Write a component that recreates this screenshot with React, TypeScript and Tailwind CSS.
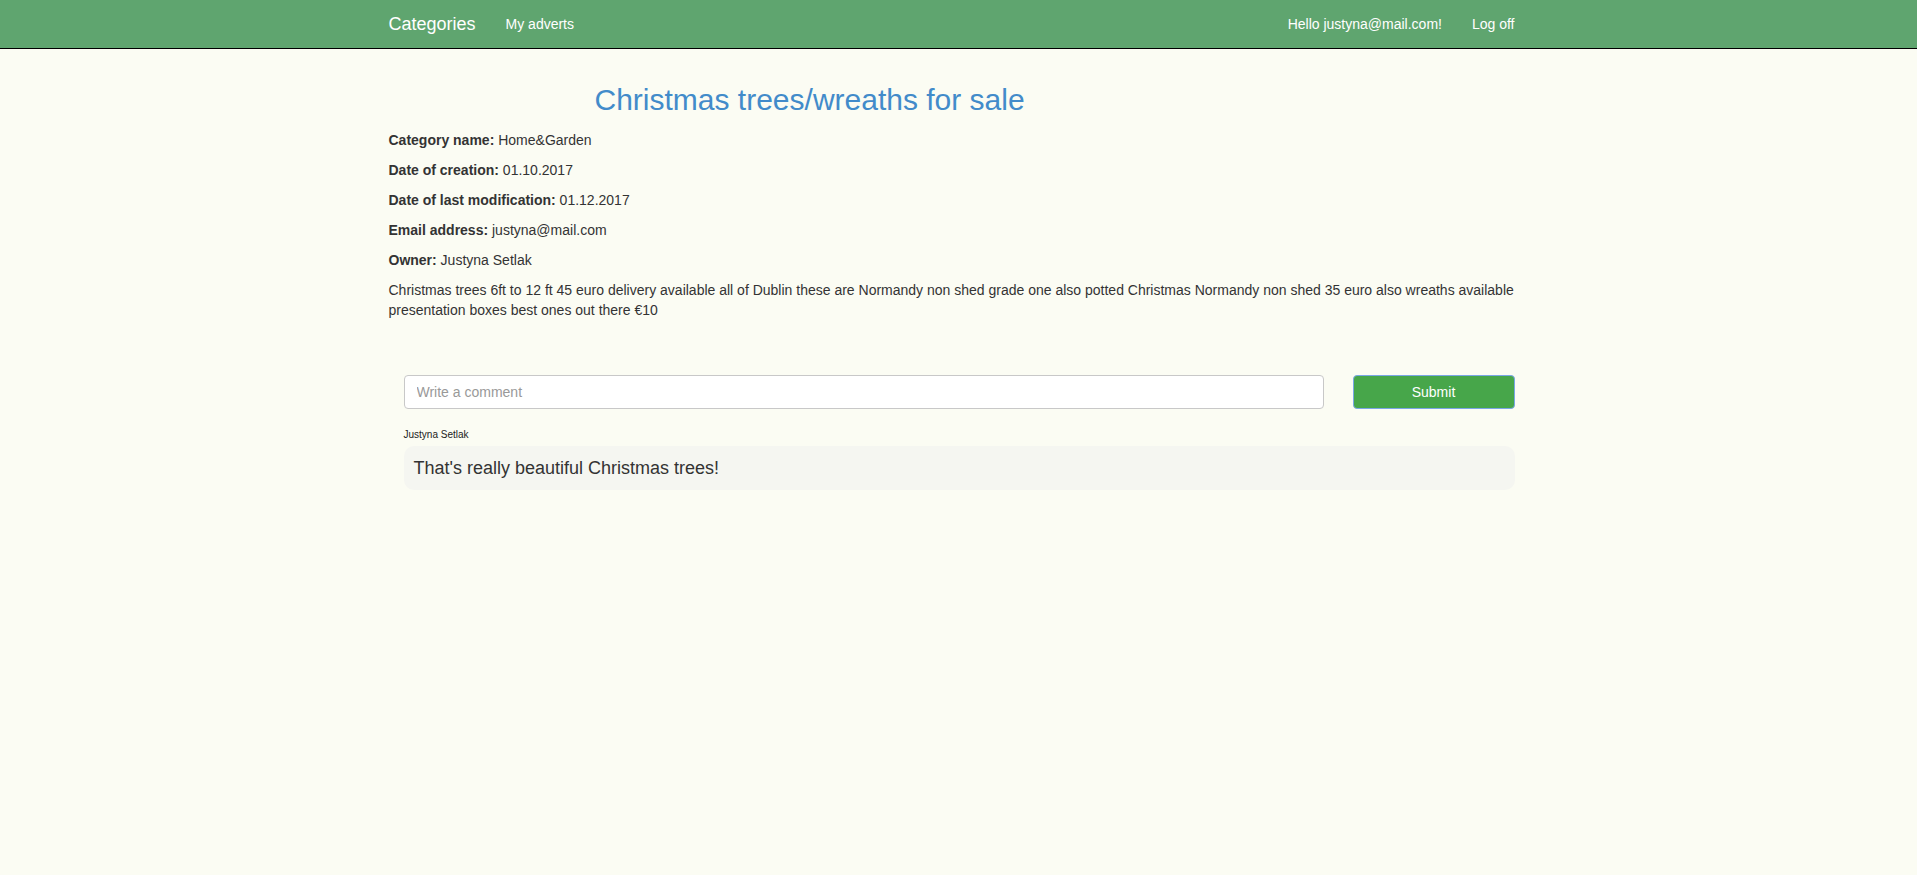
export default function App() {
  return (
    <div
      className="min-h-[875px] bg-[#fbfcf3] text-[14px] leading-5 text-[#333333]"
      style={{ fontFamily: '"Liberation Sans", Arial, sans-serif' }}
    >
      {/* Navbar */}
      <div className="h-[49px] border-b border-black bg-[#5fa56f]">
        <div className="mx-auto flex h-12 w-[1170px] items-center justify-between px-[15px] text-white">
          <div className="flex items-center">
            <span className="text-[18px]">Categories</span>
            <span className="ml-[30px]">My adverts</span>
          </div>
          <div className="mr-[14px] flex items-center">
            <span>Hello justyna@mail.com!</span>
            <span className="ml-[30px]">Log off</span>
          </div>
        </div>
      </div>

      {/* Content */}
      <div className="mx-auto w-[1170px] px-[15px]">
        <h2 className="mb-[14px] mt-[34px] pl-[206px] text-[30px] leading-[33px] text-[#428bca]">
          Christmas trees/wreaths for sale
        </h2>
        <p className="mb-[10px]">
          <b>Category name:</b> Home&amp;Garden
        </p>
        <p className="mb-[10px]">
          <b>Date of creation:</b> 01.10.2017
        </p>
        <p className="mb-[10px]">
          <b>Date of last modification:</b> 01.12.2017
        </p>
        <p className="mb-[10px]">
          <b>Email address:</b> justyna@mail.com
        </p>
        <p className="mb-[10px]">
          <b>Owner:</b> Justyna Setlak
        </p>
        <p className="mb-[10px] pr-[10px]">
          Christmas trees 6ft to 12 ft 45 euro delivery available all of Dublin these are Normandy non shed grade one also potted Christmas Normandy non shed 35 euro also wreaths available presentation boxes best ones out there €10
        </p>

        {/* Comments */}
        <div className="ml-[15px] mt-[55px] w-[1111px]">
          <div className="flex items-center gap-[29px]">
            <input
              className="h-[34px] w-[920px] rounded-[4px] border border-[#c8c8c8] bg-white px-3 text-[14px] text-[#555] outline-none placeholder:text-[#999]"
              placeholder="Write a comment"
            />
            <button className="h-[34px] w-[162px] rounded-[4px] border border-[#7aa6e6] bg-[#47a64a] text-[14px] text-white">
              Submit
            </button>
          </div>
          <div className="mt-[20px] text-[10px] leading-3 text-[#222]">Justyna Setlak</div>
          <div className="mt-[5px] rounded-[10px] bg-[#f5f6f1] px-[10px] py-[8px] text-[18px] leading-[28px] text-[#333]">
            That's really beautiful Christmas trees!
          </div>
        </div>
      </div>
    </div>
  );
}
